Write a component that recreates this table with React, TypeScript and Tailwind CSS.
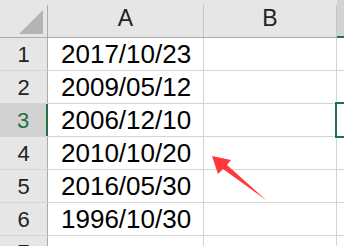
import React from 'react';

const dates = ['2017/10/23', '2009/05/12', '2006/12/10', '2010/10/20', '2016/05/30', '1996/10/30', ''];

const ActiveRow = 3;

const Sheet: React.FC = () => {
  return (
    <div
      className="relative w-[344px] h-[246px] overflow-hidden bg-white"
      style={{ fontFamily: '"Liberation Sans", Arial, sans-serif' }}
    >
      {/* column headers */}
      <div className="flex h-[38px] bg-[#e6e6e6] border-b border-[#ababab]">
        <div className="relative w-[48px] shrink-0 border-r border-[#ababab] mt-[5px]">
          <svg className="absolute left-[19px] top-[5px]" width="25" height="24" viewBox="0 0 25 24">
            <polygon points="24,0 24,24 0,24" fill="#b4b4b4" />
          </svg>
        </div>
        <div className="w-[156px] shrink-0 flex items-center justify-center border-r border-[#c6c6c6] mt-[5px] pb-[5px] text-[23px] text-[#222]">
          A
        </div>
        <div className="w-[133px] shrink-0 flex items-center justify-center border-r border-[#c6c6c6] mt-[5px] pb-[5px] text-[23px] text-[#222]">
          B
        </div>
        <div className="flex-1 bg-[#d2d2d2] border-b-2 border-[#217346] -mb-px" />
      </div>

      {/* rows */}
      {dates.map((d, i) => {
        const n = i + 1;
        const active = n === ActiveRow;
        return (
          <div key={n} className="flex h-[33px] border-b border-[#d4d4d4]">
            <div
              className={`w-[48px] shrink-0 flex items-center justify-center text-[22px] ${
                active
                  ? 'bg-[#d2d2d2] text-[#217346] border-r-2 border-[#217346]'
                  : 'bg-[#e6e6e6] text-[#222] border-r border-[#ababab]'
              }`}
            >
              {n}
            </div>
            <div className="w-[156px] shrink-0 flex items-center pl-[13px] text-[26px] text-black border-r border-[#d4d4d4] leading-none">
              {d}
            </div>
            <div className="w-[133px] shrink-0 border-r border-[#d4d4d4]" />
            <div className="relative flex-1">
              {active && (
                <div className="absolute left-[-2px] top-[-2px] right-[-4px] bottom-[-2px] border-2 border-[#217346]" />
              )}
            </div>
          </div>
        );
      })}

      {/* red callout arrow */}
      <svg className="absolute left-0 top-0 pointer-events-none" width="344" height="246" viewBox="0 0 344 246">
        <polygon
          points="212,156 231,160 227,165 266,200 223,169 218,174"
          fill="#ff3838"
        />
      </svg>
    </div>
  );
};

export default function App() {
  return <Sheet />;
}
